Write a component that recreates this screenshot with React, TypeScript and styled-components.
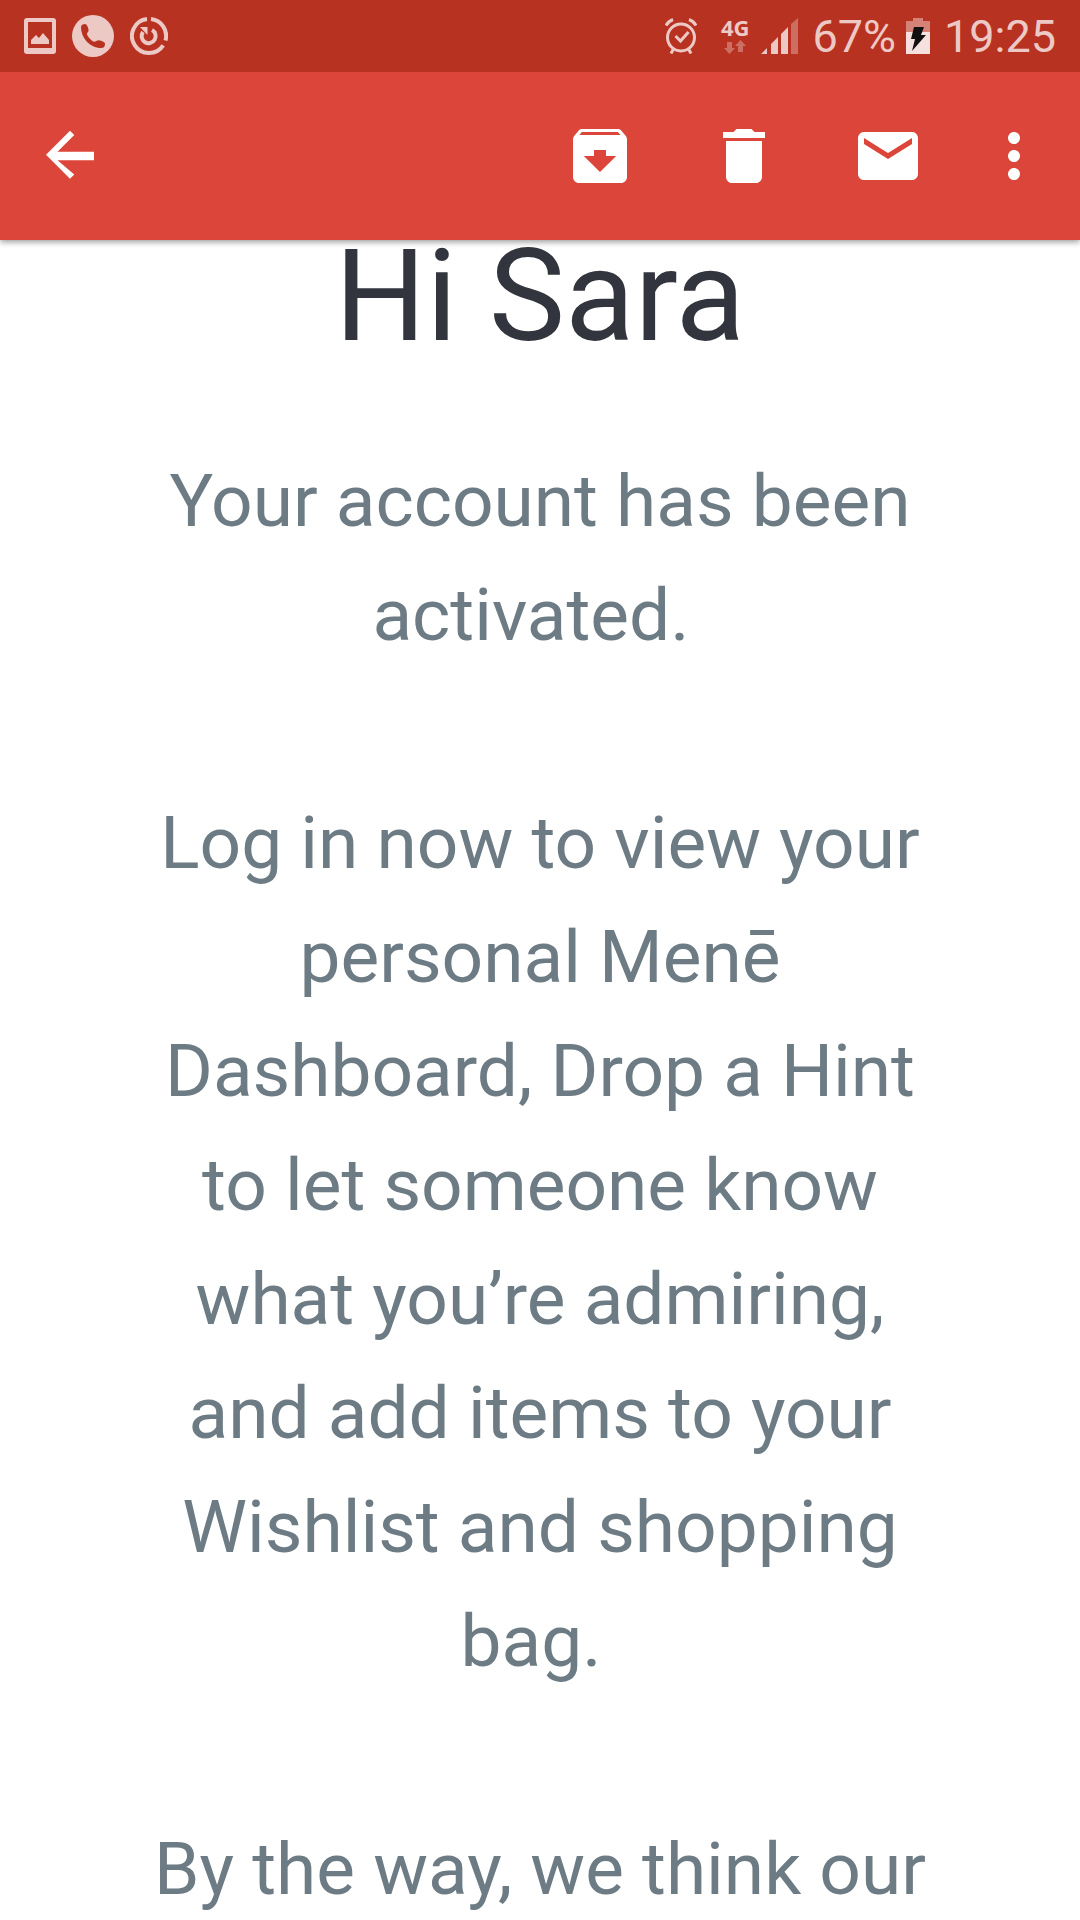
import React from "react";
import styled, { createGlobalStyle } from "styled-components";

const GlobalStyle = createGlobalStyle`
  * { box-sizing: border-box; }
  body { margin: 0; background: #fff; font-family: Roboto, "Noto Sans", sans-serif; }
`;

const Screen = styled.div`
  display: flex;
  flex-direction: column;
  height: 100vh;
  overflow: hidden;
`;

const StatusBar = styled.div`
  flex: none;
  position: relative;
  z-index: 2;
  display: flex;
  align-items: center;
  justify-content: space-between;
  height: 72px;
  padding: 0 24px;
  background: #b83222;
  color: #edc9c5;
`;

const StatusGroup = styled.div<{ $gap: number }>`
  display: flex;
  align-items: center;
  gap: ${(p) => p.$gap}px;
`;

const StatusText = styled.span`
  font-size: 45px;
  line-height: 72px;
  padding-top: 2px;
`;

const Network = styled.div`
  display: flex;
  flex-direction: column;
  align-items: center;
  gap: 4px;
`;

const NetworkType = styled.span`
  font: 700 22px/18px "Noto Sans", "Open Sans", sans-serif;
`;

const StatusSvg = styled.svg`
  display: block;
  flex: none;
  fill: currentColor;
`;

const Toolbar = styled.header`
  flex: none;
  position: relative;
  z-index: 1;
  display: flex;
  align-items: center;
  justify-content: space-between;
  height: 168px;
  padding: 0 12px 0 16px;
  background: #dc4539;
  box-shadow: 0 2px 6px rgba(0, 0, 0, 0.4);
`;

const Actions = styled.nav`
  display: flex;
`;

const IconButton = styled.button<{ $width: number }>`
  display: flex;
  align-items: center;
  justify-content: center;
  width: ${(p) => p.$width}px;
  height: 144px;
  padding: 0;
  border: 0;
  background: transparent;
  color: #fff;
  cursor: pointer;
`;

const ActionSvg = styled.svg`
  width: 72px;
  height: 72px;
  fill: currentColor;
`;

const Message = styled.main`
  flex: 1;
  min-height: 0;
  padding: 0 144px;
  text-align: center;
`;

const Greeting = styled.h1`
  margin: 0 0 92px;
  font-size: 128px;
  line-height: 112px;
  font-weight: 400;
  color: #32353e;
`;

const Paragraph = styled.p`
  margin: 0 0 114px;
  font-size: 73px;
  line-height: 114px;
  color: #6d7b84;
`;

const actions = [
  {
    label: "Archive",
    width: 144,
    path: "M20.54 5.23l-1.39-1.68C18.88 3.21 18.47 3 18 3H6c-.47 0-.88.21-1.16.55L3.46 5.23C3.17 5.57 3 6.02 3 6.5V19c0 1.1.9 2 2 2h14c1.1 0 2-.9 2-2V6.5c0-.48-.17-.93-.46-1.27zM12 17.3L6.6 12H10v-2h4v2h3.4L12 17.3zM5.12 5l.81-1h12l.94 1H5.12z",
  },
  {
    label: "Delete",
    width: 144,
    path: "M6 19c0 1.1.9 2 2 2h8c1.1 0 2-.9 2-2V7H6v12zM19 4h-3.5l-1-1h-5l-1 1H5v2h14V4z",
  },
  {
    label: "Mark as unread",
    width: 144,
    path: "M20 4H4c-1.1 0-1.99.9-1.99 2L2 18c0 1.1.9 2 2 2h16c1.1 0 2-.9 2-2V6c0-1.1-.9-2-2-2zm0 4l-8 5-8-5V6l8 5 8-5v2z",
  },
  {
    label: "More options",
    width: 108,
    path: "M12 8c1.1 0 2-.9 2-2s-.9-2-2-2-2 .9-2 2 .9 2 2 2zm0 2c-1.1 0-2 .9-2 2s.9 2 2 2 2-.9 2-2-.9-2-2-2zm0 6c-1.1 0-2 .9-2 2s.9 2 2 2 2-.9 2-2-.9-2-2-2z",
  },
];

function PictureIcon() {
  return (
    <StatusSvg width="32" height="36" viewBox="0 0 32 36" aria-hidden="true">
      <path fillRule="evenodd" d="M3 0h26a3 3 0 0 1 3 3v30a3 3 0 0 1-3 3H3a3 3 0 0 1-3-3V3a3 3 0 0 1 3-3zM4 4v26h24V4z" />
      <path d="M7 26v-4l5-5 3 3 4-5 6 7v4z" />
    </StatusSvg>
  );
}

function CallIcon() {
  return (
    <StatusSvg width="42" height="42" viewBox="0 0 42 42" aria-hidden="true">
      <circle cx="21" cy="21" r="21" />
      <path
        fill="#b83222"
        d="M9 12C9 10 11 9 13 9c2 0 4 5 3.500 7-.5 1.500-2 2-1.500 3.500C16 22 19 25.500 22 26.700c1.500.3 3-1.700 5-1.500 2 .2 6 1.800 6 3.300 0 3-1 4.500-4 4.500C18 33 9 23 9 12z"
      />
    </StatusSvg>
  );
}

function SyncIcon() {
  return (
    <StatusSvg width="38" height="38" viewBox="0 0 38 38" aria-hidden="true">
      <g fill="none" stroke="currentColor" strokeWidth="4">
        <path d="M21 2.1A17 17 0 0 1 35.500 23.500" />
        <path d="M33.200 28.300A17 17 0 1 1 17 2.100" />
        <path d="M22 13A7 7 0 1 1 13 15" />
      </g>
      <path d="M10 10h7.500v8z" />
    </StatusSvg>
  );
}

function AlarmIcon() {
  return (
    <StatusSvg width="32" height="36" viewBox="0 0 32 36" aria-hidden="true">
      <g fill="none" stroke="currentColor" strokeWidth="3">
        <circle cx="16" cy="19.500" r="13.500" />
        <path d="M1 7.500q2-4 7-6M31 7.500q-2-4-7-6M8.500 31L6 35.500M23.500 31l2.500 4.500" />
        <path d="M10.500 18l5 5 8-9" />
      </g>
    </StatusSvg>
  );
}

function DataArrows() {
  return (
    <StatusSvg width="22" height="14" viewBox="0 0 22 14" opacity="0.4" aria-hidden="true">
      <path d="M3 2h5v6h3l-5.500 6L0 8h3zM14 12h5V6h3l-5.500-6L11 6h3z" />
    </StatusSvg>
  );
}

function SignalIcon() {
  return (
    <StatusSvg width="37" height="36" viewBox="0 0 37 36" aria-hidden="true">
      <path d="M0 36l6-6v6zM10 36V26l7-7v17zM20 36V16l7-7v27z" />
      <path opacity="0.4" d="M30 36V6l7-6v36z" />
    </StatusSvg>
  );
}

function BatteryIcon() {
  return (
    <StatusSvg width="24" height="36" viewBox="0 0 24 36" aria-hidden="true">
      <path fill="#d58378" d="M0 3h7V0h10v3h7v11H0z" />
      <path fill="#f6e1df" d="M0 14h24v22H0z" />
      <path fill="#111" d="M8 9h10l-3 8h5L6 33l3-12H5z" />
    </StatusSvg>
  );
}

export default function App() {
  return (
    <>
      <GlobalStyle />
      <Screen>
        <StatusBar>
          <StatusGroup $gap={16}>
            <PictureIcon />
            <CallIcon />
            <SyncIcon />
          </StatusGroup>
          <StatusGroup $gap={12}>
            <StatusGroup $gap={24}>
              <AlarmIcon />
              <Network>
                <NetworkType>4G</NetworkType>
                <DataArrows />
              </Network>
            </StatusGroup>
            <StatusGroup $gap={14}>
              <SignalIcon />
              <StatusGroup $gap={10}>
                <StatusText>67%</StatusText>
                <BatteryIcon />
              </StatusGroup>
              <StatusText>19:25</StatusText>
            </StatusGroup>
          </StatusGroup>
        </StatusBar>
        <Toolbar>
          <IconButton type="button" aria-label="Back" $width={108}>
            <ActionSvg viewBox="0 0 24 24" aria-hidden="true">
              <path d="M20 10.600H7.830l5.590-5.590L12 3.600l-8 8 8 8 1.410-1.410L7.830 13.400H20z" />
            </ActionSvg>
          </IconButton>
          <Actions aria-label="Message actions">
            {actions.map((action) => (
              <IconButton key={action.label} type="button" aria-label={action.label} $width={action.width}>
                <ActionSvg viewBox="0 0 24 24" aria-hidden="true">
                  <path d={action.path} />
                </ActionSvg>
              </IconButton>
            ))}
          </Actions>
        </Toolbar>
        <Message>
          <Greeting>Hi Sara</Greeting>
          <Paragraph>Your account has been activated.&nbsp;</Paragraph>
          <Paragraph>
            Log in now to view your personal Menē Dashboard, Drop a Hint to let someone know what
            you’re admiring, and add items to your Wishlist and shopping bag.&nbsp;
          </Paragraph>
          <Paragraph>By the way, we think our</Paragraph>
        </Message>
      </Screen>
    </>
  );
}
